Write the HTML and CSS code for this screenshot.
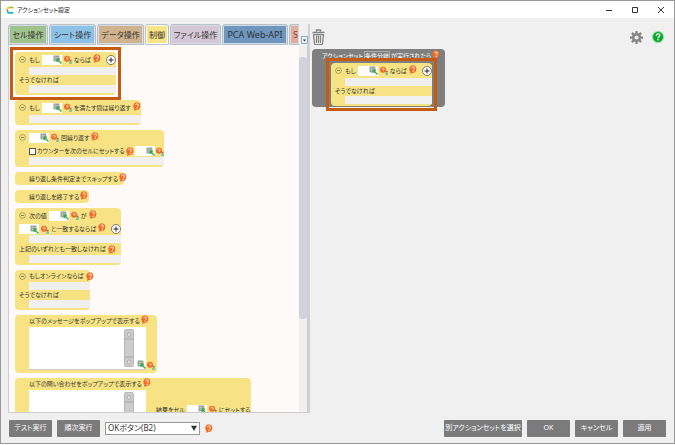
FILE: index.html
```html
<!DOCTYPE html>
<html lang="ja">
<head>
<meta charset="utf-8">
<title>アクションセット設定</title>
<link rel="stylesheet" href="styles.css">
</head>
<body>
<svg class="defs" aria-hidden="true">
  <symbol id="help" viewBox="0 0 16 18"><path d="M8 .5a7.500 7.700 0 1 1-2 15.300L2.500 18l.2-4.500A7.500 7.700 0 0 1 8 .5z" fill="#f26a21"/><path d="M5.500 6.300C5.600 2.800 11 2.800 11 6.200c0 2.300-2.600 2.200-2.600 4.300" fill="none" stroke="#fff" stroke-width="2"/><circle cx="8.400" cy="12.900" r="1.300" fill="#fff"/></symbol>
  <symbol id="pick" viewBox="0 0 17 17"><path d="M1 1h11v11H1z" fill="#8f9f8f"/><path d="M1 4.500h11M1 8h11M5 1v11" stroke="#c5cec5" stroke-width="1"/><path d="M8 8l8 8M8 8v5M8 8h5" stroke="#2faa4a" stroke-width="2.400" fill="none"/></symbol>
  <symbol id="ref" viewBox="0 0 17 18"><circle cx="6.500" cy="7.500" r="6.400" fill="#f26a21"/><path d="M4.300 6.500C4.500 3.500 9 3.700 8.800 6.500c0 1.500-2 1.400-2 3.500" fill="none" stroke="#fff" stroke-width="1.700"/><path d="M12 9.500h4v4h-4z" fill="#777"/><path d="M11 15h6v3h-6z" fill="#43c0bd"/></symbol>
  <symbol id="minus" viewBox="0 0 14 14"><circle cx="7" cy="7" r="5.800" fill="none" stroke="#8b8050" stroke-width="1.300"/><path d="M4 7h6" stroke="#6b6340" stroke-width="1.500"/></symbol>
  <symbol id="plus" viewBox="0 0 20 20"><circle cx="10" cy="10" r="9" fill="#fff" stroke="#555" stroke-width="1.500"/><path d="M5 10h10M10 5v10" stroke="#222" stroke-width="2"/></symbol>
</svg>
<div class="window">
  <header class="titlebar">
    <svg class="logo" viewBox="0 0 24 24"><path d="M5 8V4q0-2 2-2h4v6z" fill="#f5c400"/><path d="M11 2h11v5H11z" fill="#8cc63f"/><path d="M1 8h5v8H1z" fill="#f28c28"/><path d="M3 15h5v3h14v5H7q-4 0-4-4z" fill="#1ab3d8"/></svg>
    <h1>アクションセット設定</h1>
    <button class="win" aria-label="最小化"><svg viewBox="0 0 8 8"><path d="M1 4.500h6" /></svg></button>
    <button class="win" aria-label="最大化"><svg viewBox="0 0 8 8"><path d="M1.500 1.500h5v5h-5z"/></svg></button>
    <button class="win" aria-label="閉じる"><svg viewBox="0 0 8 8"><path d="M1 1l6 6M7 1L1 7"/></svg></button>
  </header>
  <main class="content">
    <section class="palette">
      <div class="tabbar">
        <nav class="tabs">
          <button class="tab green">セル操作</button>
          <button class="tab blue">シート操作</button>
          <button class="tab tan">データ操作</button>
          <button class="tab active">制御</button>
          <button class="tab mauve">ファイル操作</button>
          <button class="tab steel">PCA Web-API</button>
          <button class="tab salmon">S</button>
        </nav>
        <button class="more" aria-label="タブ一覧"><svg viewBox="0 0 8 8"><path d="M1.500 2.500h5L4 6z" fill="#345"/></svg></button>
      </div>
      <div class="scroller">
        <div class="blocks">
          <div class="block w-if marked">
            <div class="row"><svg class="i-minus"><use href="#minus"/></svg><span>もし</span><span class="cell"><input aria-label="条件"><svg class="i-pick"><use href="#pick"/></svg></span><svg class="i-ref"><use href="#ref"/></svg><span>ならば</span><svg class="i-help"><use href="#help"/></svg><svg class="i-plus"><use href="#plus"/></svg></div>
            <div class="slot"></div>
            <div class="row short">そうでなければ</div>
            <div class="slot"></div>
          </div>
          <div class="block w-while">
            <div class="row"><svg class="i-minus"><use href="#minus"/></svg><span>もし</span><span class="cell"><input aria-label="繰り返し条件"><svg class="i-pick"><use href="#pick"/></svg></span><svg class="i-ref"><use href="#ref"/></svg><span>を満たす間は繰り返す</span><svg class="i-help"><use href="#help"/></svg></div>
            <div class="slot"></div>
          </div>
          <div class="block w-count">
            <div class="row"><svg class="i-minus"><use href="#minus"/></svg><span class="cell"><input aria-label="回数"><svg class="i-pick"><use href="#pick"/></svg></span><svg class="i-ref"><use href="#ref"/></svg><span>回繰り返す</span><svg class="i-help"><use href="#help"/></svg></div>
            <div class="row mid indent"><label><input type="checkbox">カウンターを次のセルにセットする</label><svg class="i-help level"><use href="#help"/></svg><span class="cell"><input aria-label="カウンターのセル"><svg class="i-pick"><use href="#pick"/></svg></span><svg class="i-ref"><use href="#ref"/></svg></div>
            <div class="slot"></div>
          </div>
          <div class="block w-skip"><div class="row single indent"><span>繰り返し条件判定までスキップする</span><svg class="i-help"><use href="#help"/></svg></div></div>
          <div class="block w-exit"><div class="row single indent"><span>繰り返しを終了する</span><svg class="i-help"><use href="#help"/></svg></div></div>
          <div class="block w-switch">
            <div class="row"><svg class="i-minus"><use href="#minus"/></svg><span>次の値</span><span class="cell"><input aria-label="次の値"><svg class="i-pick"><use href="#pick"/></svg></span><svg class="i-ref"><use href="#ref"/></svg><span>が</span><svg class="i-help"><use href="#help"/></svg></div>
            <div class="row mid"><span class="cell"><input aria-label="一致する値"><svg class="i-pick"><use href="#pick"/></svg></span><svg class="i-ref"><use href="#ref"/></svg><span>と一致するならば</span><svg class="i-help"><use href="#help"/></svg><svg class="i-plus"><use href="#plus"/></svg></div>
            <div class="slot"></div>
            <div class="row mid"><span>上記のいずれとも一致しなければ</span><svg class="i-help level"><use href="#help"/></svg></div>
            <div class="slot"></div>
          </div>
          <div class="block w-online">
            <div class="row mid"><svg class="i-minus"><use href="#minus"/></svg><span>もしオンラインならば</span><svg class="i-help level"><use href="#help"/></svg></div>
            <div class="slot"></div>
            <div class="row short">そうでなければ</div>
            <div class="slot"></div>
          </div>
          <div class="block w-message">
            <div class="row mid indent"><span>以下のメッセージをポップアップで表示する</span><svg class="i-help"><use href="#help"/></svg></div>
            <div class="memo">
              <div class="field"><textarea aria-label="メッセージ"></textarea><svg class="bar" viewBox="0 0 20 76"><rect x="1" y="1" width="18" height="74" rx="3" fill="#ccc" stroke="#aaa" stroke-width="1.500"/><path d="M1 20h18M1 56h18" stroke="#999" stroke-width="1.500"/><circle cx="10" cy="11" r="4" fill="#ddd" stroke="#888"/><circle cx="10" cy="66" r="4" fill="#ddd" stroke="#888"/></svg><svg class="i-pick"><use href="#pick"/></svg></div>
              <svg class="i-ref"><use href="#ref"/></svg>
            </div>
          </div>
          <div class="block w-ask">
            <div class="row mid indent"><span>以下の問い合わせをポップアップで表示する</span><svg class="i-help"><use href="#help"/></svg></div>
            <div class="memo">
              <div class="field"><textarea aria-label="問い合わせ"></textarea><svg class="bar" viewBox="0 0 20 76"><rect x="1" y="1" width="18" height="74" rx="3" fill="#ccc" stroke="#aaa" stroke-width="1.500"/><path d="M1 20h18M1 56h18" stroke="#999" stroke-width="1.500"/><circle cx="10" cy="11" r="4" fill="#ddd" stroke="#888"/><circle cx="10" cy="66" r="4" fill="#ddd" stroke="#888"/></svg></div>
              <div class="row result"><span>結果をセル</span><span class="cell"><input aria-label="結果のセル"><svg class="i-pick"><use href="#pick"/></svg></span><svg class="i-ref"><use href="#ref"/></svg><span>にセットする</span></div>
            </div>
          </div>
        </div>
        <div class="track"><div class="thumb"></div></div>
      </div>
    </section>
    <section class="canvas">
      <div class="tools">
        <button class="tool" aria-label="削除"><svg class="trash" viewBox="0 0 26 32"><path d="M9 5V2h8v3M1 7h24" fill="none" stroke="#858585" stroke-width="3"/><path d="M3 11h20l-2 18q0 2-2 2H7q-2 0-2-2z" fill="none" stroke="#858585" stroke-width="2.500"/><path d="M9 13v15M13 13v15M17 13v15" stroke="#858585" stroke-width="2.500"/></svg></button>
        <button class="tool push" aria-label="設定"><svg class="gear" viewBox="0 0 26 26"><circle cx="13" cy="13" r="6.700" fill="none" stroke="#858585" stroke-width="5"/><path d="M13 0v5M13 21v5M0 13h5M21 13h5M3.800 3.800l3.600 3.600M18.600 18.600l3.600 3.600M3.800 22.200l3.600-3.600M18.600 7.400l3.600-3.600" stroke="#858585" stroke-width="4.500"/></svg></button>
        <button class="tool" aria-label="ヘルプ"><svg class="guide" viewBox="0 0 24 24"><circle cx="12" cy="12" r="11" fill="#08a82c" stroke="#8ee0a0" stroke-width="2"/><path d="M8.500 9.500c0-5 7-5 7-.5 0 3-3.500 2.500-3.500 5.500" fill="none" stroke="#fff" stroke-width="2.600"/><circle cx="12" cy="17.500" r="1.600" fill="#fff"/></svg></button>
      </div>
      <div class="event">
        <div class="head"><span>アクションセット</span><span class="name">条件分岐</span><span>が実行されたら</span><svg class="i-help"><use href="#help"/></svg></div>
        <div class="block w-if marked">
          <div class="row"><svg class="i-minus"><use href="#minus"/></svg><span>もし</span><span class="cell"><input aria-label="実行条件"><svg class="i-pick"><use href="#pick"/></svg></span><svg class="i-ref"><use href="#ref"/></svg><span>ならば</span><svg class="i-help"><use href="#help"/></svg><svg class="i-plus"><use href="#plus"/></svg></div>
          <div class="slot"></div>
          <div class="row short">そうでなければ</div>
          <div class="slot"></div>
        </div>
      </div>
    </section>
  </main>
  <footer class="footer">
    <button class="btn">テスト実行</button>
    <button class="btn">順次実行</button>
    <span class="combo"><select aria-label="ボタン"><option>OKボタン(B2)</option></select><svg viewBox="0 0 8 8"><path d="M0 1h8L4 8z" fill="#333"/></svg></span>
    <svg class="i-help level"><use href="#help"/></svg>
    <button class="btn wide">別アクションセットを選択</button>
    <button class="btn">OK</button>
    <button class="btn">キャンセル</button>
    <button class="btn">適用</button>
  </footer>
</div>
</body>
</html>
```
FILE: styles.css
```css
* { box-sizing: border-box; }
body {
  margin: 0;
  background: #fff;
  color: #333;
  font: 6px/10px "Noto Sans", "Noto Sans CJK JP", sans-serif;
  font-feature-settings: "palt";
}
button, input, select, textarea {
  margin: 0;
  padding: 0;
  border: 0;
  border-radius: 0;
  background: none;
  color: inherit;
  font: inherit;
  font-feature-settings: inherit;
}
svg { display: block; flex: none; }
.defs { position: absolute; width: 0; height: 0; }
.window {
  display: flex;
  flex-direction: column;
  height: calc(100vh - 1px);
  overflow: hidden;
  border: 1px solid #999;
  background: #f0f0f0;
}
.titlebar {
  display: flex;
  align-items: center;
  height: 17px;
  padding: 0 9px 0 5px;
  background: #fff;
}
.logo { width: 8px; height: 8px; margin-right: 3px; }
h1 { flex: 1; margin: 0; color: #222; font-size: 6px; font-weight: 400; }
.win { width: 8px; margin-left: 18px; }
.win svg { width: 8px; height: 8px; fill: none; stroke: #333; stroke-width: 1; }

.content { display: flex; flex: 1; min-height: 0; }
.palette {
  display: flex;
  flex-direction: column;
  width: 302px;
  margin: 6px 0 0 7px;
  border-right: 2px solid #d2d2d2;
}
.tabbar { display: flex; align-items: flex-end; height: 21px; }
.tabs { display: flex; flex: 1; min-width: 0; gap: 1px; overflow: hidden; }
.tab {
  flex: none;
  width: 47px;
  height: 21px;
  border: 1px solid #b9c2cb;
  border-radius: 3px 3px 0 0;
  box-shadow: inset 0 0 0 1px #d3dbe4;
  font-size: 8px;
  white-space: nowrap;
}
.green { width: 40px; background: #9fc38c; }
.blue { background: #8dc2e8; }
.tan { background: #d0b38d; }
.active { width: 24px; background: #f8e486; box-shadow: inset 0 0 0 1px #fff; }
.mauve { width: 51px; background: #d6c7d6; }
.steel { width: 66px; background: #6e96bf; font-size: 9px; }
.salmon {
  flex: 1;
  min-width: 0;
  padding-left: 3px;
  border-right: 0;
  border-top-right-radius: 0;
  background: #e2ae9c;
  color: #8a3f2c;
  font-size: 9px;
  text-align: left;
}
.more { width: 7px; height: 8px; margin: 0 0 1px 2px; border: 1px solid #8baac8; background: #e8f3fb; }
.more svg { width: 5px; height: 5px; }
.scroller {
  display: flex;
  flex: 1;
  min-height: 0;
  border: 1px solid #ccc;
  border-top: 0;
  background: #fefafa;
}
.blocks {
  display: flex;
  flex: 1;
  flex-direction: column;
  align-items: flex-start;
  gap: 5px;
  min-width: 0;
  padding: 7px 0 0 6px;
  overflow: hidden;
}
.track { width: 8px; padding-top: 12px; background: #f0f0f0; }
.thumb { height: 262px; border-radius: 3px; background: #d0d4da; }

.block {
  position: relative;
  flex: none;
  padding-bottom: 2px;
  border-radius: 4px;
  background: #f7e384;
  white-space: nowrap;
}
.marked::after {
  content: "";
  position: absolute;
  inset: -5px;
  border: 3px solid #c55a11;
  pointer-events: none;
}
.w-if { width: 101px; }
.w-while { width: 126px; }
.w-count { width: 149px; }
.w-skip { width: 109px; padding: 0; }
.w-exit { width: 74px; padding: 0; }
.w-switch { width: 106px; }
.w-online { width: 75px; }
.w-message { width: 142px; }
.w-ask { width: 236px; }
.row { display: flex; align-items: center; gap: 2px; height: 15px; padding-left: 4px; }
.row.mid { height: 12px; }
.row.short { height: 10px; }
.row.single { height: 13px; }
.row.indent { gap: 1px; padding-left: 14px; }
.slot { height: 8px; margin-left: 14px; background: #f0f0f0; }
.cell { display: flex; align-items: center; width: 20px; height: 10px; background: #fff; }
.cell input { width: 11px; height: 10px; }
label { display: flex; align-items: center; gap: 1px; }
label input { width: 7px; height: 7px; border: 1px solid #555; background: #fff; appearance: none; }
.i-minus { width: 7px; height: 7px; margin-right: 1px; }
.i-pick { width: 9px; height: 9px; }
.i-ref { width: 8px; height: 9px; }
.i-plus { width: 10px; height: 10px; margin-left: 3px; }
.i-help { width: 8px; height: 9px; margin-bottom: 3px; }
.i-help.level { margin-bottom: 0; }
.memo { display: flex; align-items: flex-end; gap: 1px; padding: 0 0 1px 14px; }
.field {
  display: flex;
  flex: none;
  align-items: flex-end;
  width: 117px;
  height: 43px;
  border-bottom: 1px solid #c9c9c9;
  background: #fff;
}
.field textarea { flex: 1; min-width: 0; height: 42px; resize: none; }
.bar { width: 10px; height: 38px; margin: 0 3px 2px 0; }
.w-ask .bar { margin-right: 12px; }
.result { align-self: flex-start; margin-top: 12px; padding-left: 9px; }

.canvas { flex: 1; min-width: 0; padding: 10px 10px 0 2px; }
.tools { display: flex; align-items: center; gap: 9px; height: 18px; margin-bottom: 3px; }
.tool.push { margin-left: auto; }
.trash { width: 13px; height: 16px; }
.gear { width: 13px; height: 13px; }
.guide { width: 12px; height: 12px; }
.event {
  width: 133px;
  height: 58px;
  padding: 0 0 0 19px;
  border-radius: 4px;
  background: #7f7f7f;
}
.head {
  display: flex;
  align-items: center;
  gap: 1px;
  height: 14px;
  margin-left: -9px;
  color: #fff;
  white-space: nowrap;
}
.head .name { border: 1px solid #aaa; line-height: 8px; }

.footer { display: flex; align-items: center; gap: 5px; height: 30px; padding: 0 8px; }
.btn { width: 43px; height: 17px; border-radius: 1px; background: #7b7b7b; color: #fff; font-size: 7px; white-space: nowrap; }
.btn.wide { width: 78px; margin-left: auto; }
.combo { display: flex; align-items: center; width: 95px; height: 13px; border: 1px solid #999; background: #fff; }
.combo select { flex: 1; min-width: 0; padding-left: 2px; appearance: none; font-size: 8px; }
.combo svg { width: 6px; height: 6px; margin-right: 2px; }
```
